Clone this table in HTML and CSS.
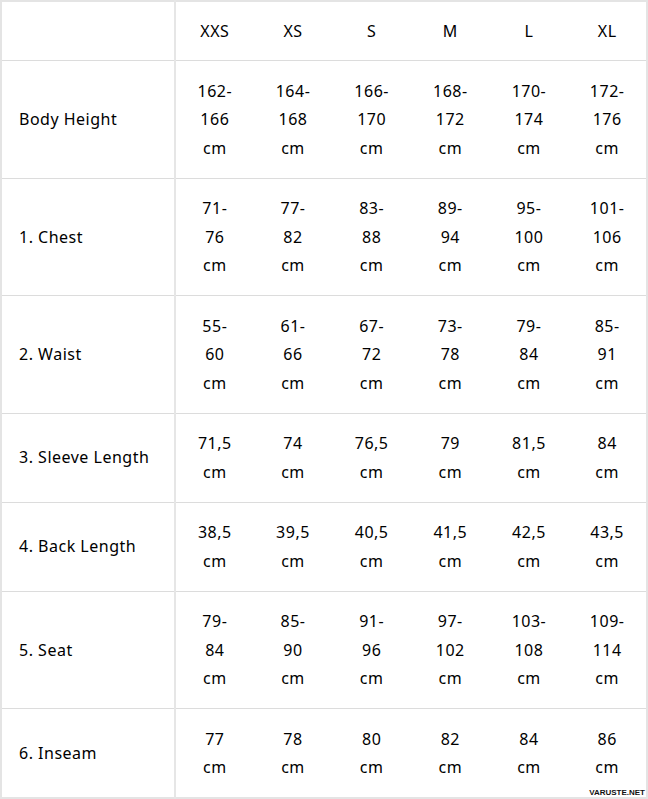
FILE: index.html
```html
<!DOCTYPE html>
<html>
<head>
<meta charset="utf-8">
<link rel="stylesheet" href="styles.css">
</head>
<body>
<div class="wrap">
<table class="sizes">
  <colgroup><col class="c-label"><col class="c-size"><col class="c-size"><col class="c-size"><col class="c-size"><col class="c-size"><col class="c-size"></colgroup>
  <thead>
    <tr class="head"><th class="label"></th><th>XXS</th><th>XS</th><th>S</th><th>M</th><th>L</th><th>XL</th></tr>
  </thead>
  <tbody>
    <tr><td class="label">Body Height</td><td>162-<br>166<br>cm</td><td>164-<br>168<br>cm</td><td>166-<br>170<br>cm</td><td>168-<br>172<br>cm</td><td>170-<br>174<br>cm</td><td>172-<br>176<br>cm</td></tr>
    <tr><td class="label">1. Chest</td><td>71-<br>76<br>cm</td><td>77-<br>82<br>cm</td><td>83-<br>88<br>cm</td><td>89-<br>94<br>cm</td><td>95-<br>100<br>cm</td><td>101-<br>106<br>cm</td></tr>
    <tr><td class="label">2. Waist</td><td>55-<br>60<br>cm</td><td>61-<br>66<br>cm</td><td>67-<br>72<br>cm</td><td>73-<br>78<br>cm</td><td>79-<br>84<br>cm</td><td>85-<br>91<br>cm</td></tr>
    <tr><td class="label">3. Sleeve Length</td><td>71,5<br>cm</td><td>74<br>cm</td><td>76,5<br>cm</td><td>79<br>cm</td><td>81,5<br>cm</td><td>84<br>cm</td></tr>
    <tr><td class="label">4. Back Length</td><td>38,5<br>cm</td><td>39,5<br>cm</td><td>40,5<br>cm</td><td>41,5<br>cm</td><td>42,5<br>cm</td><td>43,5<br>cm</td></tr>
    <tr><td class="label">5. Seat</td><td>79-<br>84<br>cm</td><td>85-<br>90<br>cm</td><td>91-<br>96<br>cm</td><td>97-<br>102<br>cm</td><td>103-<br>108<br>cm</td><td>109-<br>114<br>cm</td></tr>
    <tr><td class="label">6. Inseam</td><td>77<br>cm</td><td>78<br>cm</td><td>80<br>cm</td><td>82<br>cm</td><td>84<br>cm</td><td>86<br>cm</td></tr>
  </tbody>
</table>
<div class="mark">VARUSTE.NET</div>
</div>
</body>
</html>
```
FILE: styles.css
```css
html, body {
  margin: 0;
  padding: 0;
  background: #fff;
}
.wrap {
  position: relative;
  width: 648px;
  height: 799px;
}
.sizes {
  border-collapse: collapse;
  width: 648px;
  table-layout: fixed;
  font-family: "Noto Sans", "DejaVu Sans", sans-serif;
  font-size: 16px;
  letter-spacing: 0.5px;
  color: #000;
  border: 2px solid #e4e4e4;
}
.c-label { width: 174px; }
.sizes th, .sizes td {
  padding: 15.5px 4px;
  line-height: 28.5px;
  text-align: center;
  font-weight: normal;
  vertical-align: middle;
  border-top: 1px solid #dcdcdc;
}
.sizes .head th {
  padding: 15px 4px 14.5px;
}
.sizes .label {
  text-align: left;
  padding-left: 17px;
  border-right: 2px solid #e6e6e6;
}
.mark {
  position: absolute;
  right: 2px;
  bottom: 2px;
  font-family: "Liberation Sans", sans-serif;
  font-weight: bold;
  font-size: 8px;
  color: #111;
  background: #fff;
  padding: 0 1px;
  line-height: 9px;
}
```
